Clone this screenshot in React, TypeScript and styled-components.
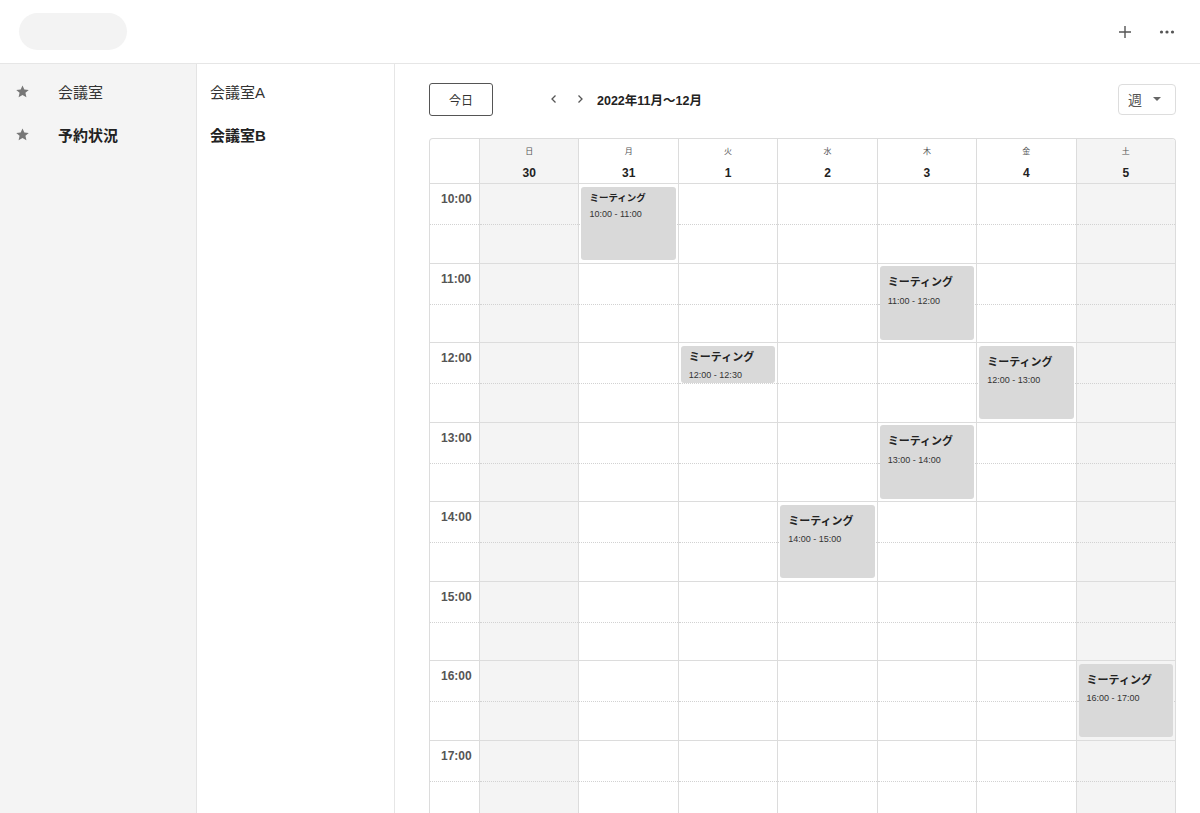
import React from "react";
import styled, { createGlobalStyle } from "styled-components";

const GlobalStyle = createGlobalStyle`
  html, body { margin: 0; padding: 0; }
  body {
    font-family: "Liberation Sans", "Noto Sans CJK JP", sans-serif;
    color: #222;
    background: #fff;
  }
  * { box-sizing: border-box; }
`;

const ROW = 79.5;
const HOURS = [10, 11, 12, 13, 14, 15, 16, 17];

const Page = styled.div`
  width: 1200px;
  height: 813px;
  overflow: hidden;
  display: flex;
  flex-direction: column;
`;

const TopBar = styled.header`
  height: 64px;
  flex: none;
  display: flex;
  align-items: center;
  justify-content: space-between;
  padding: 0 25px 0 19px;
  border-bottom: 1px solid #e6e6e6;
`;

const Pill = styled.div`
  width: 108px;
  height: 37px;
  border-radius: 19px;
  background: #f3f3f3;
  margin-top: -1px;
`;

const TopActions = styled.div`
  display: flex;
  align-items: center;
  gap: 26px;
`;

const IconButton = styled.button`
  border: none;
  background: none;
  padding: 0;
  width: 16px;
  height: 16px;
  display: flex;
  align-items: center;
  justify-content: center;
  color: #555;
`;

const Body = styled.div`
  flex: 1;
  display: flex;
  min-height: 0;
  overflow: hidden;
`;

const NavSide = styled.nav`
  width: 197px;
  flex: none;
  background: #f4f4f4;
  border-right: 1px solid #e4e4e4;
  padding-top: 6px;
`;

const NavItem = styled.div<{ $bold?: boolean }>`
  height: 43px;
  display: flex;
  align-items: center;
  padding-left: 15px;
  gap: 28px;
  font-size: 15px;
  font-weight: ${(p) => (p.$bold ? 700 : 400)};
  color: ${(p) => (p.$bold ? "#222" : "#333")};
`;

const SubSide = styled.div`
  width: 198px;
  flex: none;
  border-right: 1px solid #e6e6e6;
  padding-top: 6px;
`;

const SubItem = styled.div<{ $bold?: boolean }>`
  height: 43px;
  display: flex;
  align-items: center;
  padding-left: 13px;
  font-size: 15px;
  font-weight: ${(p) => (p.$bold ? 700 : 400)};
  color: ${(p) => (p.$bold ? "#222" : "#333")};
`;

const Main = styled.main`
  flex: 1;
  min-width: 0;
  overflow: hidden;
  padding: 19px 24px 0 34px;
  display: flex;
  flex-direction: column;
  gap: 23px;
`;

const Toolbar = styled.div`
  height: 32px;
  flex: none;
  display: flex;
  align-items: center;
`;

const TodayButton = styled.button`
  width: 64px;
  height: 33px;
  border: 1px solid #555;
  border-radius: 3px;
  background: #fff;
  font-family: inherit;
  font-size: 12px;
  color: #333;
  padding: 0;
`;

const NavArrows = styled.div`
  display: flex;
  align-items: center;
  gap: 14px;
  margin-left: 55px;
  color: #555;
`;

const RangeTitle = styled.div`
  margin-left: 11px;
  font-size: 12.5px;
  font-weight: 700;
  color: #222;
`;

const ViewSelect = styled.div`
  margin-left: auto;
  width: 58px;
  height: 31px;
  border: 1px solid #ddd;
  border-radius: 4px;
  display: flex;
  align-items: center;
  justify-content: space-between;
  padding: 0 14px 0 9px;
  font-size: 14px;
  color: #555;
`;

const Caret = styled.span`
  width: 0;
  height: 0;
  border-left: 4px solid transparent;
  border-right: 4px solid transparent;
  border-top: 4px solid #666;
`;

const Calendar = styled.div`
  display: grid;
  grid-template-columns: 49px repeat(7, 1fr);
  border: 1px solid #dcdcdc;
  border-bottom: none;
  border-radius: 4px 4px 0 0;
  overflow: hidden;
  flex: none;
`;

const HeadCorner = styled.div`
  height: 45px;
  border-bottom: 1px solid #dcdcdc;
`;

const DayHead = styled.div<{ $weekend?: boolean }>`
  height: 45px;
  border-left: 1px solid #dcdcdc;
  border-bottom: 1px solid #dcdcdc;
  background: ${(p) => (p.$weekend ? "#f4f4f4" : "#fff")};
  display: flex;
  flex-direction: column;
  align-items: center;
  padding-top: 7px;
`;

const DayLabel = styled.div`
  font-size: 8px;
  color: #555;
  height: 12px;
  line-height: 12px;
`;

const DayNumber = styled.div`
  margin-top: 8px;
  font-size: 12px;
  font-weight: 700;
  color: #222;
`;

const TimeColumn = styled.div`
  display: flex;
  flex-direction: column;
`;

const DayColumn = styled.div<{ $weekend?: boolean }>`
  position: relative;
  display: flex;
  flex-direction: column;
  border-left: 1px solid #dcdcdc;
  background: ${(p) => (p.$weekend ? "#f4f4f4" : "#fff")};
`;

const Slot = styled.div`
  height: ${ROW}px;
  flex: none;
  position: relative;
  border-bottom: 1px solid #dcdcdc;
  &::after {
    content: "";
    position: absolute;
    left: 0;
    right: 0;
    top: 40px;
    border-top: 1px dotted #d2d2d2;
  }
`;

const TimeLabel = styled.div`
  padding: 8px 0 0 11px;
  font-size: 12px;
  font-weight: 700;
  color: #555;
`;

type Variant = "compact" | "short" | "normal";

const EventCard = styled.div<{ $variant: Variant }>`
  position: absolute;
  left: 2px;
  right: 2px;
  background: #d9d9d9;
  border-radius: 3px;
  padding: ${(p) => (p.$variant === "normal" ? "9px 8px" : p.$variant === "compact" ? "5px 8px" : "4px 8px")};
  z-index: 1;
`;

const EventTitle = styled.div<{ $variant: Variant }>`
  font-size: ${(p) => (p.$variant === "compact" ? "9.5px" : "11px")};
  line-height: ${(p) => (p.$variant === "compact" ? "12px" : "14px")};
  font-weight: 700;
  color: #222;
`;

const EventTime = styled.div<{ $variant: Variant }>`
  margin-top: ${(p) => (p.$variant === "compact" ? "5.5px" : "6.5px")};
  font-size: 9px;
  line-height: 11px;
  color: #333;
`;

type Ev = { day: number; start: number; end: number; label: string; variant: Variant };

const days = [
  { label: "日", num: "30", weekend: true },
  { label: "月", num: "31" },
  { label: "火", num: "1" },
  { label: "水", num: "2" },
  { label: "木", num: "3" },
  { label: "金", num: "4" },
  { label: "土", num: "5", weekend: true },
];

const events: Ev[] = [
  { day: 1, start: 10, end: 11, label: "10:00 - 11:00", variant: "compact" },
  { day: 4, start: 11, end: 12, label: "11:00 - 12:00", variant: "normal" },
  { day: 2, start: 12, end: 12.5, label: "12:00 - 12:30", variant: "short" },
  { day: 5, start: 12, end: 13, label: "12:00 - 13:00", variant: "normal" },
  { day: 4, start: 13, end: 14, label: "13:00 - 14:00", variant: "normal" },
  { day: 3, start: 14, end: 15, label: "14:00 - 15:00", variant: "normal" },
  { day: 6, start: 16, end: 17, label: "16:00 - 17:00", variant: "normal" },
];

const Star = () => (
  <svg width="15" height="15" viewBox="0 0 24 24" fill="#777">
    <path d="M12 2.2l2.95 6.5 7.05.7-5.3 4.75 1.55 6.95L12 17.5l-6.25 3.6 1.55-6.95L2 9.4l7.05-.7z" />
  </svg>
);

const Plus = () => (
  <svg width="14" height="14" viewBox="0 0 14 14" stroke="#555" strokeWidth="1.4" fill="none">
    <path d="M7 1v12M1 7h12" />
  </svg>
);

const Dots = () => (
  <svg width="16" height="4" viewBox="0 0 16 4" fill="#555">
    <circle cx="2.5" cy="2" r="1.6" />
    <circle cx="8" cy="2" r="1.6" />
    <circle cx="13.5" cy="2" r="1.6" />
  </svg>
);

const Chevron = ({ dir }: { dir: "left" | "right" }) => (
  <svg width="12" height="12" viewBox="0 0 12 12" fill="none" stroke="#555" strokeWidth="1.3">
    <path d={dir === "left" ? "M7.5 2.5L4 6l3.5 3.5" : "M4.5 2.5L8 6l-3.5 3.5"} />
  </svg>
);

export default function App() {
  return (
    <>
      <GlobalStyle />
      <Page>
        <TopBar>
          <Pill />
          <TopActions>
            <IconButton aria-label="add">
              <Plus />
            </IconButton>
            <IconButton aria-label="more">
              <Dots />
            </IconButton>
          </TopActions>
        </TopBar>
        <Body>
          <NavSide>
            <NavItem>
              <Star />
              <span>会議室</span>
            </NavItem>
            <NavItem $bold>
              <Star />
              <span>予約状況</span>
            </NavItem>
          </NavSide>
          <SubSide>
            <SubItem>会議室A</SubItem>
            <SubItem $bold>会議室B</SubItem>
          </SubSide>
          <Main>
            <Toolbar>
              <TodayButton>今日</TodayButton>
              <NavArrows>
                <Chevron dir="left" />
                <Chevron dir="right" />
              </NavArrows>
              <RangeTitle>2022年11月〜12月</RangeTitle>
              <ViewSelect>
                <span>週</span>
                <Caret />
              </ViewSelect>
            </Toolbar>
            <Calendar>
              <HeadCorner />
              {days.map((d) => (
                <DayHead key={d.num} $weekend={d.weekend}>
                  <DayLabel>{d.label}</DayLabel>
                  <DayNumber>{d.num}</DayNumber>
                </DayHead>
              ))}
              <TimeColumn>
                {HOURS.map((h) => (
                  <Slot key={h}>
                    <TimeLabel>{h}:00</TimeLabel>
                  </Slot>
                ))}
              </TimeColumn>
              {days.map((d, i) => (
                <DayColumn key={d.num} $weekend={d.weekend}>
                  {HOURS.map((h) => (
                    <Slot key={h} />
                  ))}
                  {events
                    .filter((e) => e.day === i)
                    .map((e) => (
                      <EventCard
                        key={e.label}
                        $variant={e.variant}
                        style={{
                          top: (e.start - 10) * ROW + 2.5,
                          height: Math.max(37, (e.end - e.start) * ROW - 6),
                        }}
                      >
                        <EventTitle $variant={e.variant}>ミーティング</EventTitle>
                        <EventTime $variant={e.variant}>{e.label}</EventTime>
                      </EventCard>
                    ))}
                </DayColumn>
              ))}
            </Calendar>
          </Main>
        </Body>
      </Page>
    </>
  );
}
